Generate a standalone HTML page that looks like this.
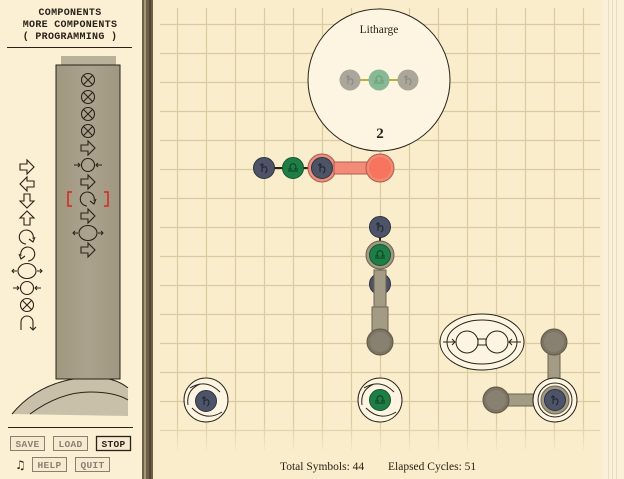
<!DOCTYPE html>
<html><head><meta charset="utf-8"><style>
html,body{margin:0;padding:0;width:624px;height:479px;overflow:hidden;background:#f9edcb}
svg{display:block}
.t{font-family:"Liberation Mono","DejaVu Sans Mono",monospace;font-weight:bold;font-size:10px;fill:#2a2218;letter-spacing:0.3px}
.b{font-family:"Liberation Mono",monospace;font-weight:bold;font-size:9.5px;letter-spacing:0.3px}
.s{font-family:"Liberation Serif",serif;font-size:11.5px;fill:#2a2218}
</style></head><body>
<svg width="624" height="479" viewBox="0 0 624 479" xmlns="http://www.w3.org/2000/svg">
<defs>
<linearGradient id="fade" x1="0" y1="0" x2="0" y2="1"><stop offset="0.88" stop-color="#f9edcb" stop-opacity="0"/><stop offset="0.95" stop-color="#f9edcb" stop-opacity="1"/></linearGradient>
<linearGradient id="col" x1="0" y1="0" x2="1" y2="0"><stop offset="0" stop-color="#9f9780"/><stop offset="0.5" stop-color="#aaa28c"/><stop offset="1" stop-color="#9f9780"/></linearGradient>
<g id="ar"><path d="M-7,-3 H0 V-7 L7,0 L0,7 V3 H-7 Z" fill="none" stroke="#2a2218" stroke-width="1.1"/></g>
<g id="xc"><circle r="6.5" fill="none" stroke="#2a2218" stroke-width="1.1"/><path d="M-4.5,-4.5 L4.5,4.5 M4.5,-4.5 L-4.5,4.5" stroke="#2a2218" stroke-width="1.1"/></g>
<g id="cw"><path d="M-1,7 A7,7 0 1 1 6,2" fill="none" stroke="#2a2218" stroke-width="1.1"/><path d="M2,2 L6,5 L8,0" fill="none" stroke="#2a2218" stroke-width="1.1"/></g>
<g id="ct"><circle r="6.5" fill="none" stroke="#2a2218" stroke-width="1.1"/><path d="M-14,0 H-8 M-10,-2 L-8,0 L-10,2 M14,0 H8 M10,-2 L8,0 L10,2" fill="none" stroke="#2a2218" stroke-width="1"/></g>
<g id="ex"><ellipse rx="9" ry="7.5" fill="none" stroke="#2a2218" stroke-width="1.1"/><path d="M-15,0 H-10 M-13,-2 L-15,0 L-13,2 M15,0 H10 M13,-2 L15,0 L13,2" fill="none" stroke="#2a2218" stroke-width="1"/></g>
<path id="sat" d="M-2,-5 V4 M-4,-3 H0 M-2,0 Q2,-3 3,1 Q3,4 1,5" fill="none" stroke-width="1"/>
<path id="lib" d="M-5,3 H5 M-5,1 H-2 A3,3 0 1 1 2,1 H5" fill="none" stroke-width="1"/>
<g id="slate"><circle r="10.5" fill="#4e5468" stroke="#2e3240" stroke-width="1"/><use href="#sat" stroke="#1e2230"/></g>
<g id="green"><circle r="10.5" fill="#1f7e46" stroke="#145530" stroke-width="1"/><use href="#lib" stroke="#0d3d20"/></g>
<g id="base"><circle r="13" fill="#7d7562" stroke="#5c5546" stroke-width="1"/><circle r="10" fill="#888070"/></g>
</defs>
<rect x="0" y="0" width="143" height="479" fill="#fbf0d4"/>
<rect x="142" y="0" width="11" height="479" fill="#6e6048"/>
<rect x="144" y="0" width="2" height="479" fill="#a79777"/>
<rect x="149" y="0" width="2" height="479" fill="#514530"/>
<text class="t" x="70" y="15" text-anchor="middle">COMPONENTS</text>
<text class="t" x="70" y="27" text-anchor="middle">MORE COMPONENTS</text>
<text class="t" x="70" y="39" text-anchor="middle">( PROGRAMMING )</text>
<line x1="7" y1="47.5" x2="132" y2="47.5" stroke="#2a2218"/>
<rect x="61" y="56" width="55" height="10" fill="#b9b19a"/>
<path d="M12,414 Q40,380 90,377 Q120,377 128,390 L128,416 Z" fill="#bdb49d" opacity="0.8"/>
<path d="M12,414 Q40,380 90,377 Q115,377 128,388" fill="none" stroke="#2a2218"/>
<path d="M30,414 Q60,392 90,392 Q115,392 128,400" fill="none" stroke="#2a2218"/>
<rect x="56" y="65" width="64" height="314" fill="url(#col)" stroke="#2a2218"/>
<g transform="translate(88,80)"><use href="#xc"/></g>
<g transform="translate(88,97)"><use href="#xc"/></g>
<g transform="translate(88,114)"><use href="#xc"/></g>
<g transform="translate(88,131)"><use href="#xc"/></g>
<g transform="translate(88,148)"><use href="#ar"/></g>
<g transform="translate(88,165)"><use href="#ct"/></g>
<g transform="translate(88,182)"><use href="#ar"/></g>
<g transform="translate(88,199)"><use href="#cw"/></g>
<path d="M72,192 H68 V206 H72 M104,192 H108 V206 H104" fill="none" stroke="#d8241c" stroke-width="1.5"/>
<g transform="translate(88,216)"><use href="#ar"/></g>
<g transform="translate(88,233)"><use href="#ex"/></g>
<g transform="translate(88,250)"><use href="#ar"/></g>
<g transform="translate(27,167)"><use href="#ar"/></g>
<g transform="translate(27,184) rotate(180)"><use href="#ar"/></g>
<g transform="translate(27,201) rotate(90)"><use href="#ar"/></g>
<g transform="translate(27,218) rotate(-90)"><use href="#ar"/></g>
<g transform="translate(27,237)"><use href="#cw"/></g>
<g transform="translate(27,254) scale(-1,1)"><use href="#cw"/></g>
<g transform="translate(27,271)"><use href="#ex"/></g>
<g transform="translate(27,288)"><use href="#ct"/></g>
<g transform="translate(27,305)"><use href="#xc"/></g>
<path d="M21,330 V322 A6,6 0 0 1 33,322 V330 M30,327 L33,330 L36,327" fill="none" stroke="#2a2218" stroke-width="1.1"/>
<line x1="8" y1="427.5" x2="133" y2="427.5" stroke="#2a2218"/>
<g class="b">
<rect x="10.5" y="436.5" width="34" height="14" fill="#f6ead0" stroke="#8a8070"/><text x="27.5" y="447" text-anchor="middle" fill="#8a8070">SAVE</text>
<rect x="53.5" y="436.5" width="34" height="14" fill="#f6ead0" stroke="#8a8070"/><text x="70.5" y="447" text-anchor="middle" fill="#8a8070">LOAD</text>
<rect x="96.5" y="436.5" width="34" height="14" fill="#f6ead0" stroke="#2a2218" stroke-width="1.3"/><text x="113.5" y="447" text-anchor="middle" fill="#2a2218">STOP</text>
<rect x="32.5" y="457.5" width="34" height="14" fill="#f6ead0" stroke="#8a8070"/><text x="49.5" y="468" text-anchor="middle" fill="#8a8070">HELP</text>
<rect x="75.5" y="457.5" width="34" height="14" fill="#f6ead0" stroke="#8a8070"/><text x="92.5" y="468" text-anchor="middle" fill="#8a8070">QUIT</text>
</g>
<text x="15" y="469" font-family="DejaVu Sans" font-size="12" fill="#2a2218">♫</text>
<g stroke="#dccaa0" stroke-width="1.2">
<path d="M177.5,8V450M206.5,8V450M235.5,8V450M264.5,8V450M293.5,8V450M322.5,8V450M351.5,8V450M380.5,8V450M409.5,8V450M438.5,8V450M467.5,8V450M496.5,8V450M525.5,8V450M554.5,8V450M583.5,8V450"/>
<path d="M160,24.5H600M160,53.5H600M160,82.5H600M160,111.5H600M160,140.5H600M160,169.5H600M160,198.5H600M160,227.5H600M160,256.5H600M160,285.5H600M160,314.5H600M160,343.5H600M160,372.5H600M160,401.5H600M160,430.5H600"/>
</g>
<rect x="153" y="0" width="450" height="479" fill="url(#fade)"/>
<rect x="603" y="0" width="21" height="479" fill="#fbf1d8"/>
<path d="M608.5,0V479M612.5,0V479M616.5,0V479" stroke="#e6dcc4"/>
<circle cx="379" cy="80" r="71" fill="#fdf5e2" stroke="#2a2218"/>
<text class="s" x="379" y="33" text-anchor="middle">Litharge</text>
<line x1="350" y1="80" x2="408" y2="80" stroke="#b6b23a" stroke-width="2"/>
<circle cx="350" cy="80" r="10.5" fill="#aba69a"/><circle cx="379" cy="80" r="10.5" fill="#87b994"/><circle cx="408" cy="80" r="10.5" fill="#aba69a"/>
<use href="#sat" x="350" y="80" stroke="#8a867c"/><use href="#sat" x="408" y="80" stroke="#8a867c"/><use href="#lib" x="379" y="80" stroke="#6a9a76"/>
<text x="380" y="138" text-anchor="middle" font-family="Liberation Serif" font-weight="bold" font-size="15" fill="#2a2218">2</text>
<line x1="264" y1="168" x2="322" y2="168" stroke="#2a2218" stroke-width="2"/>
<use href="#slate" x="264" y="168"/><use href="#green" x="293" y="168"/>
<circle cx="322" cy="168" r="14" fill="#e89080" stroke="#b05a4c"/>
<rect x="334" y="162" width="36" height="12" fill="#f28c78" stroke="#b05a4c"/>
<use href="#slate" x="322" y="168"/>
<circle cx="380" cy="168" r="14" fill="#f08872" stroke="#b05a4c"/><circle cx="380" cy="168" r="11" fill="#f7745e"/>
<line x1="380" y1="227" x2="380" y2="284" stroke="#2a2218" stroke-width="2"/>
<use href="#slate" x="380" y="227"/>
<circle cx="380" cy="255" r="14" fill="#a09880" stroke="#6c6452"/>
<use href="#green" x="380" y="255"/>
<use href="#slate" x="380" y="284"/>
<rect x="374" y="270" width="12" height="40" fill="#a39b83" stroke="#6c6452"/>
<rect x="372" y="307" width="16" height="30" fill="#a39b83" stroke="#6c6452"/>
<use href="#base" x="380" y="342"/>
<ellipse cx="482" cy="342" rx="42" ry="28" fill="#fdf5e2" stroke="#2a2218"/>
<path d="M447,342 A35,22 0 0 1 517,342 M447,342 A35,22 0 0 0 517,342" fill="none" stroke="#2a2218"/>
<circle cx="467" cy="342" r="11" fill="#fdf5e2" stroke="#2a2218"/><circle cx="497" cy="342" r="11" fill="#fdf5e2" stroke="#2a2218"/>
<rect x="478" y="339" width="8" height="6" fill="#fdf5e2" stroke="#2a2218"/>
<path d="M443,342H455M452,339L455,342L452,345M521,342H509M512,339L509,342L512,345" fill="none" stroke="#2a2218"/>
<circle cx="206" cy="400" r="22" fill="#fdf5e2" stroke="#2a2218"/>
<path d="M190,388 Q206,378 220,392 M222,412 Q206,422 192,408 M188,405 Q186,390 200,384" fill="none" stroke="#2a2218"/>
<use href="#slate" x="206" y="401"/>
<circle cx="380" cy="400" r="22" fill="#fdf5e2" stroke="#2a2218"/>
<path d="M364,388 Q380,378 394,392 M396,412 Q380,422 366,408 M362,405 Q360,390 374,384" fill="none" stroke="#2a2218"/>
<use href="#green" x="380" y="400"/>
<rect x="548" y="350" width="12" height="40" fill="#a39b83" stroke="#6c6452"/>
<rect x="505" y="394" width="40" height="12" fill="#a39b83" stroke="#6c6452"/>
<use href="#base" x="554" y="342"/>
<use href="#base" x="496" y="400"/>
<circle cx="555" cy="400" r="22" fill="#fdf5e2" stroke="#2a2218"/>
<circle cx="555" cy="400" r="17" fill="none" stroke="#2a2218"/>
<circle cx="555" cy="400" r="14" fill="#a09880" stroke="#6c6452"/>
<use href="#slate" x="555" y="400"/>
<text class="s" x="280" y="470">Total Symbols: 44</text>
<text class="s" x="388" y="470">Elapsed Cycles: 51</text>
</svg>
</body></html>
